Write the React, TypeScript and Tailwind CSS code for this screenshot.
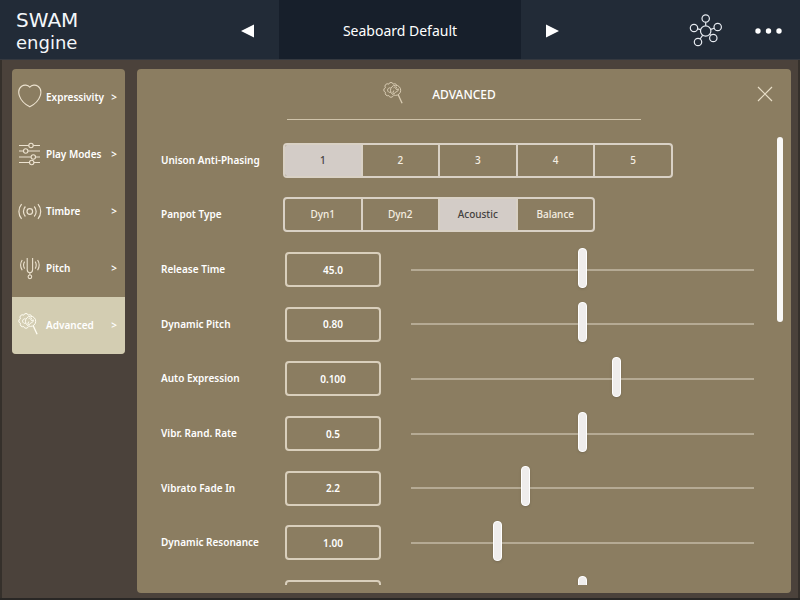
import { useState } from "react";
import type { ReactNode } from "react";

const HeartIcon = () => (
	<svg viewBox="0 0 24 30" className="h-[30px] w-6 shrink-0" fill="none" stroke="#ece2cf" strokeWidth="1.1">
		<path d="M11.8 4.2C9.8 1.8 6.2 1.5 3.6 3.2.6 5.4.3 9.4 1.4 12.8c1.6 4.8 5.8 8.6 10.4 11 4.6-2.4 8.8-6.2 10.4-11 1.1-3.4.8-7.4-2.2-9.6-2.6-1.7-6.2-1.4-8.2 1z" />
	</svg>
);

const FadersIcon = () => (
	<svg viewBox="0 0 24 30" className="h-[30px] w-6 shrink-0" fill="none" stroke="#ece2cf" strokeWidth="1.1">
		<path d="M1 5.5h9.8M15.2 5.5H22M1 11h4.5M9.9 11H22M1 17h12.1M17.5 17H22M1 22.5h10.5M15.9 22.5H22" />
		<circle cx="13" cy="5.5" r="2.2" />
		<circle cx="7.7" cy="11" r="2.2" />
		<circle cx="15.3" cy="17" r="2.2" />
		<circle cx="13.7" cy="22.5" r="2.2" />
	</svg>
);

const WavesIcon = () => (
	<svg viewBox="0 0 24 30" className="h-[30px] w-6 shrink-0" fill="none" stroke="#ece2cf" strokeWidth="1.2">
		<circle cx="11.8" cy="14.5" r="2.8" />
		<path d="M7.4 9.5c-2.6 2.8-2.6 7.2 0 10M16.2 9.5c2.6 2.8 2.6 7.2 0 10M3.6 7.2c-3.6 4.2-3.6 10.4 0 14.6M20 7.2c3.6 4.2 3.6 10.4 0 14.6" />
	</svg>
);

const ForkIcon = () => (
	<svg viewBox="0 0 24 30" className="h-[30px] w-6 shrink-0" fill="none" stroke="#ece2cf" strokeWidth="1.1">
		<path d="M9.2 4v11.8c0 1.8 1.2 2.9 2.7 2.9s2.7-1.1 2.7-2.9V4M11.9 18.7V21" />
		<circle cx="11.9" cy="22.8" r="1.8" />
		<path d="M6.6 7.6c-1.2 2-1.2 5 0 7M4.2 6c-1.9 3-1.9 7.2 0 10.2M17.2 7.6c1.2 2 1.2 5 0 7M19.6 6c1.9 3 1.9 7.2 0 10.2" />
	</svg>
);

const GearSearchIcon = ({ stroke = "#fffdf2" }: { stroke?: string }) => (
	<svg viewBox="0 0 24 30" className="h-[30px] w-6 shrink-0" fill="none" stroke={stroke} strokeWidth="1">
		<path d="M13.8 5.6A2.2 2.2 0 0 0 10.3 4.2A2.4 2.4 0 0 0 5.7 4.2A2.4 2.4 0 0 0 2.5 7.7A2.4 2.4 0 0 0 2.5 12.3A2.4 2.4 0 0 0 5.7 15.5A2.4 2.4 0 0 0 10.3 15.6" />
		<circle cx="12.6" cy="10.3" r="5.1" />
		<path d="M15.2 14.8l3.9 8.4" strokeWidth="1.3" />
		<path d="M7.6 7.9A2.3 2.3 0 1 0 7.8 12.2M10.4 8.2c.6-1.2 2-1.6 3.2-1.1l-.9 1.8 1.1.8 1.5-.9c.3 1.9-1 3.1-2.5 3l-1.6 2-1.4-1.1 1-2.2" />
	</svg>
);

const HubIcon = () => (
	<svg viewBox="0 0 34 34" className="size-[34px]" fill="none" stroke="#e6eaf0" strokeWidth="1.2">
		<circle cx="16.7" cy="17" r="5.2" />
		<circle cx="16.7" cy="4.5" r="3.7" />
		<circle cx="28.7" cy="13" r="3.7" />
		<circle cx="24.3" cy="24" r="3.7" />
		<circle cx="9" cy="28" r="3.7" />
		<circle cx="5" cy="14" r="3.7" />
		<path d="M16.7 8.2v3.6M25.2 14.2l-3.5 1.2M20.8 20.3l1 1M13.7 21.2l-2.6 3.8M8.6 14.9l3.1.8" />
	</svg>
);

const sections: { name: string; icon: ReactNode }[] = [
	{ name: "Expressivity", icon: <HeartIcon /> },
	{ name: "Play Modes", icon: <FadersIcon /> },
	{ name: "Timbre", icon: <WavesIcon /> },
	{ name: "Pitch", icon: <ForkIcon /> },
	{ name: "Advanced", icon: <GearSearchIcon /> },
];

const params = [
	{ id: "release", label: "Release Time", value: "45.0", position: 500 },
	{ id: "dynpitch", label: "Dynamic Pitch", value: "0.80", position: 500 },
	{ id: "autoexp", label: "Auto Expression", value: "0.100", position: 603 },
	{ id: "vibrate", label: "Vibr. Rand. Rate", value: "0.5", position: 500 },
	{ id: "vibfade", label: "Vibrato Fade In", value: "2.2", position: 330 },
	{ id: "dynres", label: "Dynamic Resonance", value: "1.00", position: 245 },
	{ id: "extra", label: "", value: "", position: 500 },
];

function Segmented({ label, options, initial, width }: { label: string; options: string[]; initial: string; width: string }) {
	const [selected, setSelected] = useState(initial);

	return (
		<div className="flex items-center">
			<span className="w-[122px] shrink-0">{label}</span>
			<div
				role="group"
				aria-label={label}
				className={`${width} flex h-[35px] divide-x-2 divide-[#d9d1c5] overflow-hidden rounded-[4px] border-2 border-[#d9d1c5] font-medium`}
			>
				{options.map((option) => (
					<button
						key={option}
						type="button"
						aria-pressed={option === selected}
						onClick={() => setSelected(option)}
						className={`flex-1 ${option === selected ? "bg-[#d3ccc7] text-[#444140]" : "text-[#f5eee2]"}`}
					>
						{option}
					</button>
				))}
			</div>
		</div>
	);
}

function ParamRow({ id, label, value, position }: { id: string; label: string; value: string; position: number }) {
	return (
		<div className="flex items-center">
			<label htmlFor={id} className="w-[124px] shrink-0">
				{label}
			</label>
			<input
				id={id}
				type="text"
				aria-label={label || "Next parameter"}
				defaultValue={value}
				className="h-[35px] w-24 shrink-0 rounded-[4px] border-2 border-[#d9cfbc] text-center outline-none"
			/>
			<input
				type="range"
				aria-label={`${label || "Next parameter"} slider`}
				max={1000}
				defaultValue={position}
				className="ml-[30px] h-11 min-w-0 flex-1 appearance-none bg-transparent outline-none [&::-webkit-slider-runnable-track]:h-[2px] [&::-webkit-slider-runnable-track]:bg-[#b5aa94] [&::-webkit-slider-thumb]:-mt-[21px] [&::-webkit-slider-thumb]:h-10 [&::-webkit-slider-thumb]:w-[9px] [&::-webkit-slider-thumb]:appearance-none [&::-webkit-slider-thumb]:rounded-[4px] [&::-webkit-slider-thumb]:border [&::-webkit-slider-thumb]:border-white [&::-webkit-slider-thumb]:bg-[#efedec] [&::-webkit-slider-thumb]:shadow-sm"
			/>
		</div>
	);
}

export default function App() {
	const [active, setActive] = useState("Advanced");

	return (
		<div className="flex h-screen flex-col border-b-2 border-[#292725] bg-[#4b423b] font-['Noto_Sans',sans-serif] text-white">
			<header className="grid h-[60px] shrink-0 grid-cols-[1fr_242px_1fr] border-b border-[#353940] bg-[#222b37] pt-[2px]">
				<div className="flex items-center justify-between pr-[25px] pl-4">
					<div className="font-['DejaVu_Sans',sans-serif] text-[#f4f7fa]">
						<div className="text-[20px] leading-[24px]">SWAM</div>
						<div className="text-[18px] leading-[22px]">engine</div>
					</div>
					<button type="button" aria-label="Previous preset">
						<svg viewBox="0 0 13 14" className="h-[14px] w-[13px]" fill="#fff">
							<path d="M0 7L13 .5v13z" />
						</svg>
					</button>
				</div>
				<div className="-mt-[2px] flex items-center justify-center bg-[#171f2b] pt-[2px] text-[14px]">Seaboard Default</div>
				<div className="flex items-center justify-between pr-[18px] pl-[25px]">
					<button type="button" aria-label="Next preset">
						<svg viewBox="0 0 13 14" className="h-[14px] w-[13px]" fill="#fff">
							<path d="M13 7L0 .5v13z" />
						</svg>
					</button>
					<div className="flex items-center gap-8">
						<button type="button" aria-label="Connections">
							<HubIcon />
						</button>
						<button type="button" aria-label="More">
							<svg viewBox="0 0 27 6" className="h-[6px] w-[27px]" fill="#fff">
								<circle cx="3" cy="3" r="2.7" />
								<circle cx="13.5" cy="3" r="2.7" />
								<circle cx="24" cy="3" r="2.7" />
							</svg>
						</button>
					</div>
				</div>
			</header>

			<div className="flex min-h-0 flex-1 items-start gap-3 border-x-2 border-[#35302b] pt-[9px] pr-[7px] pb-[5px] pl-[10px]">
				<nav className="w-[113px] shrink-0 overflow-hidden rounded-[4px] bg-[#8b7d61] text-[10px] font-semibold">
					{sections.map((section) => (
						<button
							key={section.name}
							type="button"
							onClick={() => setActive(section.name)}
							className={`flex h-[57px] w-full items-center gap-1 pr-2 pl-[6px] ${section.name === active ? "bg-[#d3cdb2]" : ""}`}
						>
							{section.icon}
							<span>{section.name}</span>
							<span className="ml-auto">&gt;</span>
						</button>
					))}
				</nav>

				<main className="flex h-full min-w-0 flex-1 flex-col rounded-[4px] bg-[#8b7d61] pb-2">
					<div className="grid h-16 shrink-0 grid-cols-[1fr_54%_1fr]">
						<div className="col-start-2 grid h-[51px] grid-cols-[1fr_auto_1fr] items-center border-b border-[#cfc3aa] pt-[2px]">
							<div className="mr-[25px] justify-self-end">
								<GearSearchIcon stroke="#d9ccb3" />
							</div>
							<h1 className="text-[12px] font-medium">ADVANCED</h1>
						</div>
						<button type="button" aria-label="Close" className="mt-[17px] mr-[18px] self-start justify-self-end">
							<svg viewBox="0 0 16 16" className="size-4" stroke="#e9dfc8" strokeWidth="1.2">
								<path d="M1 1l14 14M15 1L1 15" />
							</svg>
						</button>
					</div>

					<div className="flex min-h-0 flex-1 overflow-hidden pr-2 pl-6">
						<div className="grid h-[492px] min-w-0 flex-1 auto-rows-fr text-[10px] font-semibold">
							<Segmented label="Unison Anti-Phasing" options={["1", "2", "3", "4", "5"]} initial="1" width="w-[390px]" />
							<Segmented label="Panpot Type" options={["Dyn1", "Dyn2", "Acoustic", "Balance"]} initial="Acoustic" width="w-[312px]" />
							{params.map((param) => (
								<ParamRow key={param.id} {...param} />
							))}
						</div>
						<div className="mt-1 ml-[23px] h-[185px] w-[6px] shrink-0 rounded-full bg-[#f8f8f7]" />
					</div>
				</main>
			</div>
		</div>
	);
}
